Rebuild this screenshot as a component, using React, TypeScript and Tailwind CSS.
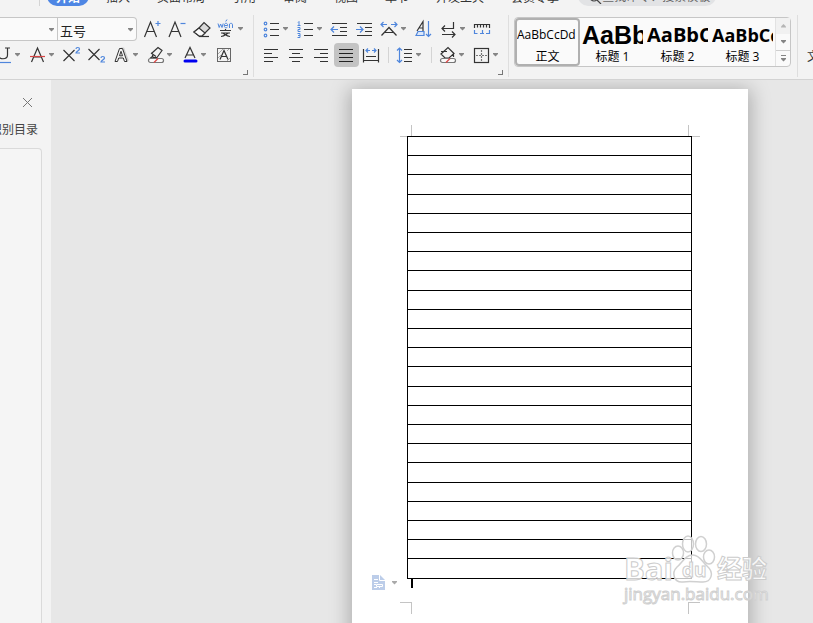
import type { ReactNode } from 'react';

const INK = '#333333';
const BLUE = '#4f86dc';

function Arrow({ label, muted = false }: { label: string; muted?: boolean }) {
  return (
    <button type="button" aria-label={label} className="flex h-6 w-[9px] shrink-0 items-center justify-center">
      <svg width="5" height="4" viewBox="0 0 5 4" aria-hidden="true">
        <path d="M0 0h5v1L2.500 3.500 0 1z" fill={muted ? '#a9a9a9' : '#858585'} />
      </svg>
    </button>
  );
}

function Glyph({ children }: { children: ReactNode }) {
  return (
    <svg
      width="21"
      height="20"
      viewBox="0 0 21 20"
      fill="none"
      stroke={INK}
      strokeWidth="1.2"
      className="shrink-0"
      aria-hidden="true"
    >
      {children}
    </svg>
  );
}

function Tool({ label, children, active = false }: { label: string; children: ReactNode; active?: boolean }) {
  return (
    <button
      type="button"
      aria-label={label}
      aria-pressed={active}
      className={
        active
          ? 'flex h-6 w-[25px] shrink-0 items-center justify-center rounded bg-[#c3c3c3]'
          : 'flex h-6 w-[25px] shrink-0 items-center justify-center rounded'
      }
    >
      <Glyph>{children}</Glyph>
    </button>
  );
}

function Split({ label, children }: { label: string; children: ReactNode }) {
  return (
    <div className="mr-1 flex shrink-0">
      <button type="button" aria-label={label} className="flex h-6 w-[21px] items-center justify-center">
        <Glyph>{children}</Glyph>
      </button>
      <Arrow label={`${label}选项`} />
    </div>
  );
}

function Launcher({ label }: { label: string }) {
  return (
    <button type="button" aria-label={label} className="mr-[5px] mt-[3px] h-[5px] w-[5px] self-end border-b border-r border-[#777]" />
  );
}

const GroupDivider = () => (
  <div className="flex pb-[2px] pt-[9px]">
    <div className="w-px bg-[#dedede]" />
  </div>
);
const InnerDivider = () => <div className="mx-1 my-1 w-px shrink-0 bg-[#d4d4d4]" />;

const tabs = ['插入', '页面布局', '引用', '审阅', '视图', '章节', '开发工具', '会员专享'];

function Tabs() {
  return (
    <nav className="flex h-[6px] shrink-0 items-end whitespace-nowrap text-xs leading-5 text-[#333]">
      <div className="ml-[39px] h-2 w-px shrink-0 bg-[#d4d4d4]" />
      <button type="button" className="ml-[7px] h-5 w-[42px] shrink-0 rounded-full bg-[#4e86e4] pt-[2px] font-bold text-white">
        开始
      </button>
      <div className="ml-[17px] flex gap-[27px]">
        {tabs.map((t) => (
          <button type="button" key={t} className="h-5 shrink-0 pt-[2px]">
            {t}
          </button>
        ))}
      </div>
      <button
        type="button"
        className="ml-[19px] flex h-5 w-[138px] shrink-0 items-center rounded-full bg-[#e2e3e5] pl-[10px] pt-[2px] text-[#666]"
      >
        <svg width="14" height="14" viewBox="0 0 14 14" fill="none" stroke="#444" strokeWidth="1.2" aria-hidden="true">
          <circle cx="6" cy="7" r="4" />
          <path d="M9 10l4 4" />
        </svg>
        查找命令、搜索模板
      </button>
    </nav>
  );
}

function FontGroup() {
  return (
    <section aria-label="字体" className="flex w-[253px] shrink-0 flex-col overflow-hidden">
      <div className="mt-[11px] flex h-6">
        <div className="flex w-[137px] overflow-hidden rounded-r border border-l-0 border-[#c6c6c6] bg-[#fafafa]">
          <input aria-label="字体名称" className="w-[47px] bg-transparent px-1 outline-none" />
          <Arrow label="选择字体" />
          <div className="relative ml-px flex-1 border-l border-[#c6c6c6]">
            <select
              aria-label="字号"
              className="h-[21px] w-full appearance-none bg-transparent pl-[2px] text-[13px] leading-5 text-[#222] outline-none"
            >
              <option>五号</option>
            </select>
            <svg className="pointer-events-none absolute right-[3px] top-[10px]" width="5" height="4" viewBox="0 0 5 4" aria-hidden="true">
              <path d="M0 0h5v1L2.500 3.500 0 1z" fill="#858585" />
            </svg>
          </div>
        </div>
        <div className="ml-[3px] flex">
          <Tool label="增大字号">
            <path d="M2.500 18L8.500 3l6 15M5 12.500h7" />
            <path d="M13.500 4.500h5M16 2v5" stroke={BLUE} />
          </Tool>
          <Tool label="减小字号">
            <path d="M2 18L8 3l6 15M4.500 12.500h7" />
            <path d="M13.500 4.500h5" stroke={BLUE} />
          </Tool>
          <Tool label="清除格式">
            <path d="M7 9l5-5.500 6 5.500-8 8H7l-5-4z" fill="#d9d9d9" />
            <path d="M2 13l5-4 6 5-3 3H7z" fill="#fafafa" />
            <path d="M7 17.500h10" />
          </Tool>
          <Split label="拼音指南">
            <path
              d="M3 4.500l1.200 4L5.600 5 7 8.500l1.200-4M9.300 6.500h3.400c0-3-3.400-3-3.400 0s2.400 2.600 3.400 1.300M10.700 2.500l1.300-2M14.500 9V5c1-1 3-1 3 .8V9"
              stroke={BLUE}
              strokeWidth="1"
            />
            <path d="M5 11.500h11M10.500 10v1.500M7 14c2 0 4 3.500 8 3.500M14 14c-2 0-4 3.500-8 3.500M6 14h9" />
          </Split>
        </div>
      </div>
      <div className="-ml-2 mt-[2px] flex h-6">
        <Split label="下划线">
          <path d="M6.500 3v7c0 5 9 5 9 0V3M13 3h5" />
          <path d="M4 17.500h15" stroke={BLUE} />
        </Split>
        <Split label="删除线">
          <path d="M5.500 17l6-14 6 14M7.500 12h8" />
          <path d="M4 11.500h15" stroke="#d84545" />
        </Split>
        <Tool label="上标">
          <path d="M1.500 5l11 11M12.500 5l-11 11" />
          <path d="M14 4c0-2 3.500-2 3.500 0 0 1.500-3.500 2.500-3.500 4h4" stroke={BLUE} />
        </Tool>
        <Tool label="下标">
          <path d="M1.500 4l11 11M12.500 4l-11 11" />
          <path d="M14 13c0-2 3.500-2 3.500 0 0 1.500-3.500 2.500-3.500 4h4" stroke={BLUE} />
        </Tool>
        <Split label="文字效果">
          <path d="M11 4l2 0 4.500 12" stroke="#cfcfcf" strokeWidth="3" />
          <path
            d="M5 16.500L9.500 3.500h3l4.500 13h-2.500l-1.200-3.500H8.700l-1.200 3.500zM9.500 10.800h3L11 6.300z"
            fill="#f4f4f4"
            strokeWidth="1"
          />
        </Split>
        <Split label="突出显示">
          <path d="M8 8l6-5.500 4 3-5 7H9zM9 11l-3 2.500M7 8l5 3.500" />
          <rect x="4.500" y="13.500" width="15" height="4" rx="2" fill="#fafafa" stroke="#777" />
          <path d="M10 17.500l4-4" stroke="#d84545" />
        </Split>
        <Split label="字体颜色">
          <path d="M7 13l5-10.500L17 13M8.500 10h7" />
          <path d="M7 16h11" stroke="#0000f0" strokeWidth="3" strokeLinecap="round" />
        </Split>
        <Tool label="字符底纹">
          <rect x="3.500" y="3.500" width="13" height="13" stroke="#666" strokeWidth="1" />
          <path d="M4 9l5-5M4 13l3-3M13 16l3-3M13 6l2-2" stroke="#aaa" strokeWidth="1" />
          <path d="M6 14.500l4-9 4 9M7.500 11.500h5" />
        </Tool>
      </div>
      <Launcher label="字体设置" />
    </section>
  );
}

function ParagraphGroup() {
  return (
    <section aria-label="段落" className="flex w-[254px] shrink-0 flex-col">
      <div className="ml-[6px] mt-[11px] flex h-6">
        <Split label="项目符号">
          <g stroke={BLUE}>
            <circle cx="5.500" cy="4.500" r="1.300" />
            <circle cx="5.500" cy="10.500" r="1.300" />
            <circle cx="5.500" cy="16.500" r="1.300" />
          </g>
          <path d="M10 4.500h9M10 10.500h9M10 16.500h9" />
        </Split>
        <Split label="编号">
          <path
            d="M4 3.500l1-1v4M3.500 6.500h3M3.500 8.500h2.500v2H4v2h2.500M3.500 14.500H6v4H3.500M4 16.500h2"
            stroke={BLUE}
            strokeWidth="1"
          />
          <path d="M10 4.500h9M10 10.500h9M10 16.500h9" />
        </Split>
        <Tool label="减少缩进">
          <path d="M2 4.500h15M10 8.500h7M10 12.500h7M2 16.500h15" />
          <path d="M1 10.500h7M4 7.500l-3 3 3 3" stroke={BLUE} />
        </Tool>
        <Tool label="增加缩进">
          <path d="M2 4.500h15M10 8.500h7M10 12.500h7M2 16.500h15" />
          <path d="M1 10.500h7M5 7.500l3 3-3 3" stroke={BLUE} />
        </Tool>
        <Split label="中文版式">
          <path d="M3.500 16.500l7.500-8 7.500 8M7 13.500h8" />
          <path d="M3 5.500h6M5.500 3L3 5.500 5.500 8M13 5.500h6M16.500 3L19 5.500 16.500 8" stroke={BLUE} />
        </Split>
        <Tool label="排序">
          <path d="M3 12L9 2.500V12M5.500 9H9" />
          <path d="M2 16.500l2-4h6v4z" stroke={BLUE} fill="#dbe7fa" />
          <path d="M14.500 2v15.500M12 15l2.500 2.500L17 15" stroke={BLUE} />
        </Tool>
        <Split label="换行符">
          <path d="M16.500 3v6.500H5M8 6.500l-3 3 3 3M5 15.500h13M15 12.500l3 3-3 3" />
        </Split>
        <Tool label="制表位">
          <path d="M1.500 9V5.500h15V9M4.500 5.500v3M7.500 5.500v3M10.500 5.500v3M13.500 5.500v3" />
          <path d="M1.500 11v3.500h3M13 14.500h3.500V11M7 14.500h4M9.500 11v3.500" stroke={BLUE} />
        </Tool>
      </div>
      <div className="ml-[5px] mt-[2px] flex h-6">
        <Tool label="左对齐">
          <path d="M3 4.500h14M3 8.500h8M3 12.500h14M3 16.500h9" />
        </Tool>
        <Tool label="居中">
          <path d="M3 4.500h14M6 8.500h8M3 12.500h14M6 16.500h8" />
        </Tool>
        <Tool label="右对齐">
          <path d="M3 4.500h14M9 8.500h8M3 12.500h14M9 16.500h8" />
        </Tool>
        <Tool label="两端对齐" active>
          <path d="M3 4.500h14M3 8.500h14M3 12.500h14M3 16.500h14" stroke="#222" />
        </Tool>
        <Tool label="分散对齐">
          <path d="M2.500 4v13.500M17.500 4v13.500M5 11.500h10M2.500 15.500h15" />
          <path d="M5 5.500h4M7 3.500l-2 2 2 2M11 5.500h4M13 3.500l2 2-2 2" stroke={BLUE} />
        </Tool>
        <InnerDivider />
        <Split label="行距">
          <path d="M6.500 3v14.500M4 5.500L6.500 3 9 5.500M4 15l2.500 2.500L9 15" stroke={BLUE} />
          <path d="M11 4.500h8M11 8.500h8M11 12.500h8M11 16.500h8" />
        </Split>
        <InnerDivider />
        <Split label="底纹颜色">
          <path d="M5 9l7-6.500 6 6L13 13H9zM5 6.500h6M17.500 8v4" />
          <rect x="4.500" y="13.500" width="15" height="4" rx="2" fill="#fafafa" stroke="#777" />
          <path d="M10 17.500l4-4" stroke="#d84545" />
        </Split>
        <Split label="边框">
          <rect x="4.500" y="3.500" width="14" height="14" />
          <path d="M11.500 5v11M6 10.500h11" stroke="#777" strokeDasharray="2 1" />
        </Split>
      </div>
      <Launcher label="段落设置" />
    </section>
  );
}

const styles = [
  { name: '正文', sample: 'AaBbCcDd', cls: 'font-["Open_Sans"] text-xs' },
  { name: '标题 1', sample: 'AaBbCc', cls: 'font-["Liberation_Sans"] text-[25px] font-bold' },
  { name: '标题 2', sample: 'AaBbCc', cls: 'font-["Open_Sans"] text-[20px] font-bold' },
  { name: '标题 3', sample: 'AaBbCc', cls: 'font-["Open_Sans"] text-[18px] font-bold' },
];

function StyleGallery() {
  return (
    <section aria-label="样式" className="ml-[5px] mr-[6px] mt-[11px] flex h-[50px] shrink-0 rounded border border-[#c6c6c6] bg-[#fafafa]">
      {styles.map((s, i) => (
        <button
          type="button"
          key={s.name}
          className={
            i === 0
              ? 'flex w-[65px] flex-col rounded-sm border-2 border-[#b0b0b0] text-black'
              : 'flex w-[65px] flex-col border-2 border-transparent text-black'
          }
        >
          <span className={`flex h-[31px] w-full items-center overflow-hidden whitespace-nowrap leading-none ${s.cls}`}>{s.sample}</span>
          <span className="w-full text-center text-xs leading-[14px]">{s.name}</span>
        </button>
      ))}
      <div className="flex w-[15px] flex-col border-l border-[#e2e2e2]">
        <button type="button" aria-label="上一行" className="flex h-4 items-center justify-center bg-[#f1f1f1]">
          <svg width="5" height="4" viewBox="0 0 5 4" aria-hidden="true">
            <path d="M0 3.500h5v-1L2.500 0 0 2.500z" fill="#b5b5b5" />
          </svg>
        </button>
        <button type="button" aria-label="下一行" className="flex h-[17px] items-center justify-center border-b border-[#cfcfcf]">
          <svg width="5" height="4" viewBox="0 0 5 4" aria-hidden="true">
            <path d="M0 0h5v1L2.500 3.500 0 1z" fill="#858585" />
          </svg>
        </button>
        <button type="button" aria-label="更多样式" className="flex h-[15px] items-center justify-center">
          <svg width="5" height="7" viewBox="0 0 5 7" aria-hidden="true">
            <path d="M0 0h5v1H0zM0 3h5v1L2.500 6.500 0 4z" fill="#858585" />
          </svg>
        </button>
      </div>
    </section>
  );
}

function SidePane() {
  return (
    <aside className="flex w-[51px] shrink-0 flex-col bg-[#f3f3f3]">
      <button type="button" aria-label="关闭" className="mr-[18px] mt-[17px] self-end">
        <svg width="11" height="11" viewBox="0 0 11 11" stroke="#777" aria-hidden="true">
          <path d="M1 1l9 9M10 1l-9 9" />
        </svg>
      </button>
      <div className="mt-3 flex justify-end whitespace-nowrap pr-[13px] text-xs leading-5 text-[#444]">识别目录</div>
      <div className="mr-[9px] mt-2 flex-1 rounded-tr-[4px] border-r border-t border-[#dadada] bg-[#f5f5f5]" />
    </aside>
  );
}

const rows = Array.from({ length: 23 }, (_, i) => i);

function Watermark() {
  return (
    <div className="pointer-events-none absolute left-[272px] top-[446px] w-[150px] text-white/80">
      <div className="flex h-[50px] items-end font-bold [-webkit-text-stroke:1px_#cccccc]">
        <span className="w-[46px] text-[31px] leading-[34px]">Bai</span>
        <div className="relative h-[50px] w-[47px]">
          <svg width="47" height="50" viewBox="0 0 47 50" fill="#ffffff" fillOpacity=".75" stroke="#d0d0d0" strokeWidth="1.500" aria-hidden="true">
            <ellipse cx="8" cy="18" rx="5.500" ry="7" />
            <ellipse cx="18" cy="9" rx="5.500" ry="8" />
            <ellipse cx="31" cy="9" rx="5.500" ry="7.500" />
            <ellipse cx="39" cy="22" rx="5.500" ry="7" />
            <path d="M23 20c7 0 9 7 14 11 8 7 4 16-4 16-6 0-14-1-20 0-9 1-12-9-6-15 5-4 8-12 16-12z" />
          </svg>
          <span className="absolute left-3 top-[25px] text-[19px] leading-5">du</span>
        </div>
        <span className="whitespace-nowrap text-[25px] leading-[34px]">经验</span>
      </div>
      <div className="whitespace-nowrap text-[17px] leading-[18px] [-webkit-text-stroke:1px_#d0d0d0]">jingyan.baidu.com</div>
    </div>
  );
}

function Page() {
  return (
    <article className="relative ml-[301px] mt-[9px] flex w-[396px] shrink-0 flex-col bg-white pt-9 shadow-[0_3px_18px_3px_rgba(0,0,0,0.25)]">
      <div className="flex justify-between px-12">
        <div className="h-3 w-3 border-b border-r border-[#c4c4c4]" />
        <div className="h-3 w-3 border-b border-l border-[#c4c4c4]" />
      </div>
      <table className="relative -mt-px ml-[55px] h-[443px] w-[285px] border-separate border-spacing-0 border-l border-t border-black">
        <tbody>
          {rows.map((r) => (
            <tr key={r}>
              <td className="border-b border-r border-black p-0" />
            </tr>
          ))}
        </tbody>
      </table>
      <div className="flex h-[23px]">
        <svg width="13" height="15" viewBox="0 0 13 15" className="-mt-1 ml-5" aria-hidden="true">
          <path d="M0 0h8l5 5v10H0z" fill="#bccde9" />
          <path d="M7.500 0v5.500H13M2 4.500h4M2 7.500h4M2 9.500h2M4.500 9.500h6v2h-6zM2 12.500h3M7.500 12v1" stroke="#fff" fill="none" />
        </svg>
        <div className="-mt-2 ml-[5px]">
          <Arrow label="粘贴选项" muted />
        </div>
        <div className="ml-3 h-[9px] w-[2px] bg-black" />
      </div>
      <div className="flex h-20 justify-between px-12">
        <div className="h-3 w-3 border-r border-t border-[#c4c4c4]" />
        <div className="h-3 w-3 border-l border-t border-[#c4c4c4]" />
      </div>
      <Watermark />
    </article>
  );
}

export default function App() {
  return (
    <div className='flex h-screen flex-col overflow-hidden bg-[#f3f3f3] font-["Open_Sans","Noto_Sans_CJK_SC",sans-serif]'>
      <header className="flex shrink-0 flex-col border-b border-[#d3d3d3]">
        <Tabs />
        <div className="flex h-[73px] overflow-hidden">
          <FontGroup />
          <GroupDivider />
          <ParagraphGroup />
          <GroupDivider />
          <StyleGallery />
          <GroupDivider />
          <button type="button" className="ml-[9px] mt-[43px] h-4 shrink-0 text-xs leading-4 text-[#333]">
            文字排版
          </button>
        </div>
      </header>
      <main className="flex min-h-0 flex-1">
        <SidePane />
        <div className="flex flex-1 flex-col overflow-hidden bg-[#e7e7e7]">
          <Page />
        </div>
      </main>
    </div>
  );
}
